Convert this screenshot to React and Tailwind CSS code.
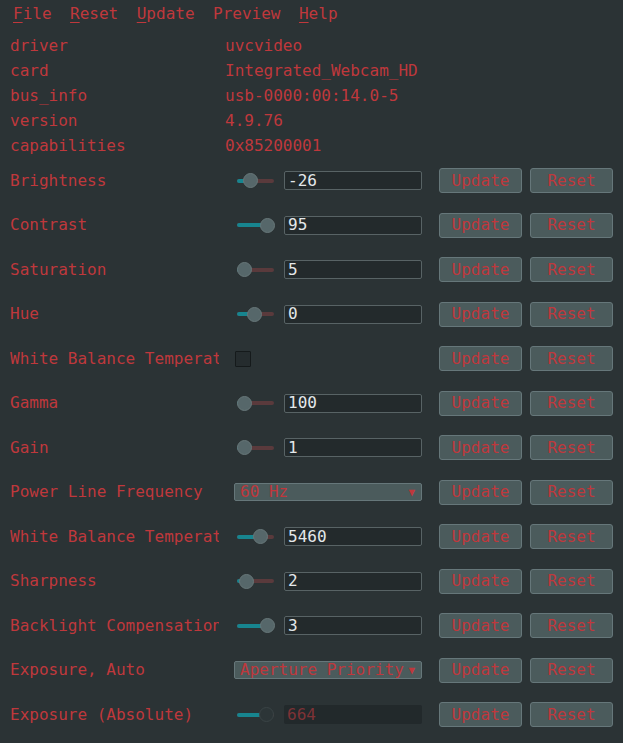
import React from "react";

const RED = "text-[#bf383c]";

const info = [
  ["driver", "uvcvideo"],
  ["card", "Integrated_Webcam_HD"],
  ["bus_info", "usb-0000:00:14.0-5"],
  ["version", "4.9.76"],
  ["capabilities", "0x85200001"],
];

const controls = [
  { label: "Brightness", type: "slider", value: "-26", f: 0.3 },
  { label: "Contrast", type: "slider", value: "95", f: 1 },
  { label: "Saturation", type: "slider", value: "5", f: 0 },
  { label: "Hue", type: "slider", value: "0", f: 0.47 },
  { label: "White Balance Temperature, Auto", type: "check" },
  { label: "Gamma", type: "slider", value: "100", f: 0 },
  { label: "Gain", type: "slider", value: "1", f: 0 },
  { label: "Power Line Frequency", type: "select", value: "60 Hz" },
  { label: "White Balance Temperature", type: "slider", value: "5460", f: 0.7 },
  { label: "Sharpness", type: "slider", value: "2", f: 0.12 },
  { label: "Backlight Compensation", type: "slider", value: "3", f: 1 },
  { label: "Exposure, Auto", type: "select", value: "Aperture Priority" },
  { label: "Exposure (Absolute)", type: "slider", value: "664", f: 0.98, disabled: true },
];

function Slider({ f, disabled }) {
  const thumbLeft = 2.5 + f * 23;
  return (
    <div className="relative w-[44px] h-[16px] shrink-0">
      <div className="absolute left-[3px] right-[4px] top-[6px] h-[4px] rounded-full bg-[#5a3a3c]" />
      <div
        className="absolute left-[3px] top-[6px] h-[4px] rounded-full bg-[#17858f]"
        style={{ width: `${thumbLeft + 4}px` }}
      />
      <div
        className={
          "absolute top-[0.5px] w-[15px] h-[15px] rounded-full border " +
          (disabled ? "bg-[#2c3537] border-[#3a4446]" : "bg-[#56676a] border-[#677779]")
        }
        style={{ left: `${thumbLeft}px` }}
      />
    </div>
  );
}

function Btn({ children }) {
  return (
    <div className={"w-[83px] h-[25px] flex items-center justify-center rounded-[3px] border border-[#66777a] bg-[#4b5b5c] shrink-0 " + RED}>
      {children}
    </div>
  );
}

function Control({ c }) {
  if (c.type === "check") {
    return (
      <div className="w-[188px] flex items-center pl-[1px]">
        <div className="w-[16px] h-[16px] border border-[#151a1b] bg-[#252c2e] rounded-[1px]" />
      </div>
    );
  }
  if (c.type === "select") {
    return (
      <div className={"w-[188px] h-[18px] flex items-center justify-between rounded-[2px] border border-[#66777a] bg-[#4b5b5c] pl-[5px] pr-[6px] " + RED}>
        <span className="leading-none whitespace-nowrap">{c.value}</span>
        <span className="text-[11px] leading-none">▼</span>
      </div>
    );
  }
  return (
    <div className="w-[188px] flex items-center gap-[6px]">
      <Slider f={c.f} disabled={c.disabled} />
      <div
        className={
          "w-[138px] h-[19px] flex items-center pl-[3px] rounded-[2px] " +
          (c.disabled
            ? "bg-[#22292b] text-[#7e3236]"
            : "bg-[#232a2c] border border-[#586365] text-[#e4e8ea]")
        }
      >
        <span className="leading-none">{c.value}</span>
      </div>
    </div>
  );
}

export default function App() {
  return (
    <div
      className="min-h-screen w-[623px] bg-[#2b3335] text-[16px] pt-[1px]"
      style={{ fontFamily: '"DejaVu Sans Mono", monospace' }}
    >
      <div className={"h-[26px] flex items-center pl-[13px] gap-[18.5px] " + RED}>
        <span><span className="underline underline-offset-[3px]">F</span>ile</span>
        <span><span className="underline underline-offset-[3px]">R</span>eset</span>
        <span><span className="underline underline-offset-[3px]">U</span>pdate</span>
        <span>Preview</span>
        <span><span className="underline underline-offset-[3px]">H</span>elp</span>
      </div>
      <div className="pt-[6.5px]">
        {info.map(([k, v]) => (
          <div key={k} className={"h-[25px] flex items-center " + RED}>
            <div className="w-[225px] pl-[10px] shrink-0">{k}</div>
            <div>{v}</div>
          </div>
        ))}
      </div>
      <div>
        {controls.map((c) => (
          <div key={c.label} className={"h-[44.5px] flex items-center " + RED}>
            <div className="w-[234px] pl-[10px] shrink-0">
              <div className="w-[209px] overflow-hidden whitespace-nowrap">{c.label}</div>
            </div>
            <Control c={c} />
            <div className="ml-[17px] flex gap-[8px]">
              <Btn>Update</Btn>
              <Btn>Reset</Btn>
            </div>
          </div>
        ))}
      </div>
    </div>
  );
}
